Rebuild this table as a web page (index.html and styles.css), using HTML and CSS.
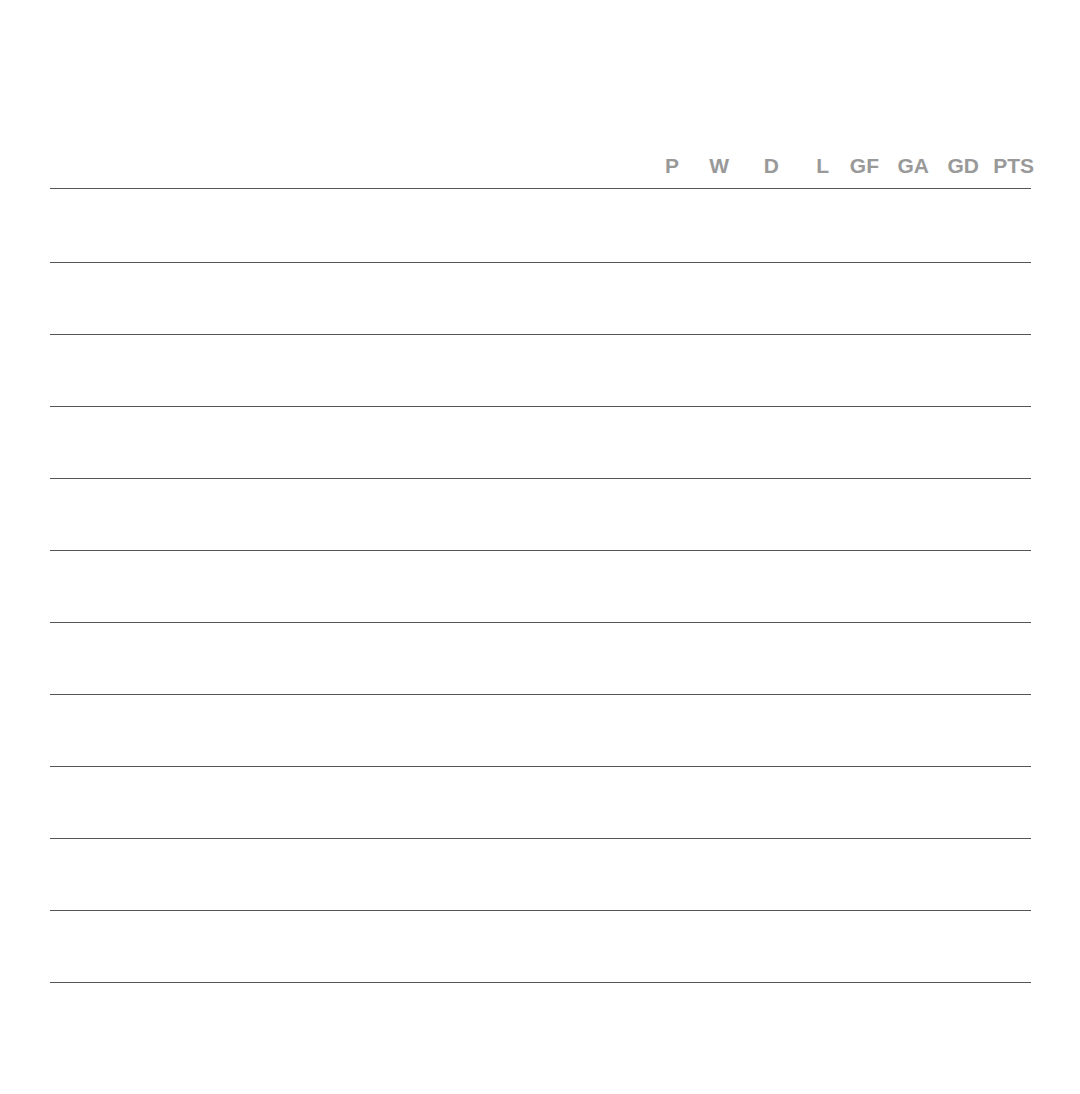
FILE: index.html
```html
<!DOCTYPE html>
<html>
<head>
<meta charset="utf-8">
<link rel="stylesheet" href="styles.css">
</head>
<body>
<div class="table">
  <div class="head">
    <div class="team"></div>
    <div class="stat">P</div>
    <div class="stat">W</div>
    <div class="stat">D</div>
    <div class="stat">L</div>
    <div class="stat">GF</div>
    <div class="stat">GA</div>
    <div class="stat">GD</div>
    <div class="stat pts">PTS</div>
  </div>
  <div class="row first"></div>
  <div class="row"></div>
  <div class="row"></div>
  <div class="row"></div>
  <div class="row"></div>
  <div class="row"></div>
  <div class="row"></div>
  <div class="row"></div>
  <div class="row"></div>
  <div class="row"></div>
  <div class="row"></div>
</div>
</body>
</html>
```
FILE: styles.css
```css
html, body {
  margin: 0;
  padding: 0;
  background: #fff;
}
body {
  font-family: "Liberation Sans", Arial, sans-serif;
}
.table {
  margin: 0 0 0 50px;
  padding-top: 152px;
  width: 981px;
}
.head {
  display: flex;
  align-items: flex-end;
  box-sizing: border-box;
  height: 37px;
  border-bottom: 1px solid #555;
}
.team {
  flex: 1;
}
.head .stat {
  width: 50px;
  text-align: right;
  font-size: 21px;
  font-weight: bold;
  line-height: 24px;
  color: #999;
  padding-bottom: 10px;
  white-space: nowrap;
}
.head .stat.pts {
  width: 55px;
  margin-right: -3px;
}
.row {
  height: 71px;
  border-bottom: 1px solid #555;
}
.row.first {
  height: 73px;
}
```
